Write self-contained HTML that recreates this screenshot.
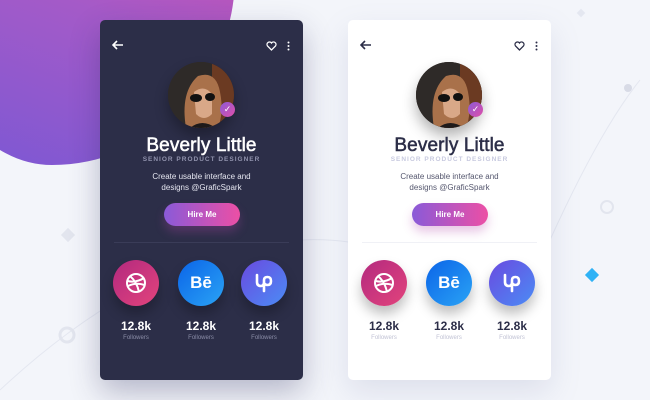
<!DOCTYPE html>
<html><head><style>
*{margin:0;padding:0;box-sizing:border-box}
body{width:650px;height:400px;overflow:hidden;background:#f3f5fa;font-family:"Liberation Sans",sans-serif;position:relative}
.blob{position:absolute;left:-70px;top:-150px;width:305px;height:315px;border-radius:45% 55% 60% 40%/50% 40% 60% 50%;background:linear-gradient(200deg,#e04fa8 0%,#a45ac8 50%,#7a58d4 100%)}
.card{position:absolute;top:20px;width:203px;height:360px;border-radius:5px}
.dark{left:100px;background:#2c2e48;box-shadow:0 12px 30px rgba(40,40,90,.3)}
.light{left:348px;background:#fff;box-shadow:0 12px 30px rgba(120,130,170,.18)}
.c{position:absolute;left:0;width:100%;text-align:center}
.av{position:absolute;left:68px;top:42px;width:66px;height:66px;border-radius:50%;overflow:hidden;background:#3a2e28;box-shadow:0 8px 14px rgba(0,0,0,.3)}
.chk{position:absolute;left:120px;top:82px;width:15px;height:15px;border-radius:50%;background:linear-gradient(135deg,#8b5ad8,#e04fa8);color:#fff;font-size:9px;text-align:center;line-height:15px}
.name{top:115px;font-size:19px;letter-spacing:.1px;-webkit-text-stroke:.5px currentColor}
.sub{top:136px;font-size:6.5px;font-weight:bold;letter-spacing:1px}
.desc{top:151px;font-size:8px;line-height:11px}
.btn{position:absolute;left:64px;top:183px;width:76px;height:23px;border-radius:12px;background:linear-gradient(90deg,#8a5ad8,#ec4fa5);color:#fff;font-size:8px;font-weight:bold;text-align:center;line-height:23px;box-shadow:0 6px 10px rgba(180,70,170,.3)}
.div{position:absolute;left:14px;right:14px;top:222px;height:1px}
.ic{position:absolute;top:240px;width:46px;height:46px;border-radius:50%;color:#fff;text-align:center;line-height:46px;font-weight:bold;font-size:17px;box-shadow:0 8px 12px rgba(0,0,0,.25)}
.ic svg{position:absolute;left:11px;top:11px}
.i1{left:13px;background:linear-gradient(135deg,#b3297f,#e2447c)}
.i2{left:78px;background:linear-gradient(135deg,#0b64e8,#2aa3f5)}
.i3{left:141px;background:linear-gradient(135deg,#6a4ae0,#4b8cf5)}
.num{position:absolute;top:299px;width:60px;text-align:center;font-size:12px;font-weight:bold}
.fol{position:absolute;top:315px;width:60px;text-align:center;font-size:6px}
.dark .name,.dark .num{color:#fff}.dark .sub{color:#9193ad}.dark .desc{color:#e5e6f0}.dark .fol{color:#8c8ea8}.dark .div{background:#3a3c58}
.light .name,.light .num{color:#2c2e48}.light .sub{color:#c7c9df}.light .desc{color:#55576e}.light .fol{color:#c0c2d4}.light .div{background:#f0f1f6}
.top{position:absolute;top:20px;font-size:11px}
</style></head><body>
<div class="blob"></div>
<svg style="position:absolute;left:0;top:0" width="650" height="400"><path d="M0 390 Q150 250 300 240 Q400 235 460 300" stroke="#e4e7f0" fill="none"/><path d="M550 240 Q600 130 640 80" stroke="#e4e7f0" fill="none"/><circle cx="67" cy="335" r="7" stroke="#e2e5ee" stroke-width="3" fill="none"/><circle cx="607" cy="207" r="6" stroke="#e2e5ee" stroke-width="2" fill="none"/><circle cx="628" cy="88" r="4" fill="#d8dbe6"/><rect x="63" y="230" width="10" height="10" transform="rotate(45 68 235)" fill="#e2e5ee"/><rect x="587" y="270" width="10" height="10" transform="rotate(45 592 275)" fill="#2fb2f5"/><rect x="578" y="10" width="6" height="6" transform="rotate(45 581 13)" fill="#e4e7f0"/></svg>
<div class="card dark">
<svg class="top" style="left:12px" width="12" height="10"><path d="M11 5H2M5 1L1 5 5 9" stroke="#fff" stroke-width="1.6" fill="none"/></svg>
<svg class="top" style="left:166px;top:21px" width="11" height="10"><path d="M5.5 9L1.5 5A2.2 2.2 0 0 1 5.5 2 2.2 2.2 0 0 1 9.5 5Z" stroke="#fff" stroke-width="1.3" fill="none"/></svg>
<svg class="top" style="left:187px;top:21px" width="3" height="10"><circle cx="1.5" cy="1.5" r="1" fill="#fff"/><circle cx="1.5" cy="5" r="1" fill="#fff"/><circle cx="1.5" cy="8.5" r="1" fill="#fff"/></svg>
<div class="av"><svg width="66" height="66"><rect width="66" height="66" fill="#2e2a28"/><rect x="44" width="22" height="66" fill="#6b3a22"/><path d="M18 66 Q12 30 30 14 Q48 8 52 30 Q56 50 50 66Z" fill="#a9714a"/><path d="M26 30 Q36 22 44 32 L44 52 Q36 60 28 52Z" fill="#d9a888"/><ellipse cx="28" cy="36" rx="6" ry="4" fill="#111"/><ellipse cx="42" cy="35" rx="5" ry="4" fill="#111"/><path d="M22 66 Q34 56 48 66Z" fill="#1e1a1a"/></svg></div><div class="chk">✓</div>
<div class="c name">Beverly Little</div><div class="c sub">SENIOR PRODUCT DESIGNER</div>
<div class="c desc">Create usable interface and<br>designs @GraficSpark</div>
<div class="btn">Hire Me</div><div class="div"></div>
<div class="ic i1"><svg width="24" height="24" fill="none" stroke="#fff" stroke-width="2"><circle cx="12" cy="12" r="9"/><path d="M6 5Q13 11 15 21M3.5 10Q12 12 20 7M4 15Q12 11 20.5 14"/></svg></div><div class="ic i2">Bē</div><div class="ic i3"><svg width="24" height="24" fill="none" stroke="#fff" stroke-width="2.6" stroke-linecap="round"><path d="M5 4V11Q5 15 9 15Q12 15 12 11V9Q12 6 15.5 6Q19 6 19 10Q19 14 15.5 14Q13 14 12 12M12 10V20"/></svg></div>
<div class="num" style="left:6px">12.8k</div><div class="num" style="left:71px">12.8k</div><div class="num" style="left:134px">12.8k</div>
<div class="fol" style="left:6px">Followers</div><div class="fol" style="left:71px">Followers</div><div class="fol" style="left:134px">Followers</div>
</div>
<div class="card light">
<svg class="top" style="left:12px" width="12" height="10"><path d="M11 5H2M5 1L1 5 5 9" stroke="#2c2e48" stroke-width="1.6" fill="none"/></svg>
<svg class="top" style="left:166px;top:21px" width="11" height="10"><path d="M5.5 9L1.5 5A2.2 2.2 0 0 1 5.5 2 2.2 2.2 0 0 1 9.5 5Z" stroke="#2c2e48" stroke-width="1.3" fill="none"/></svg>
<svg class="top" style="left:187px;top:21px" width="3" height="10"><circle cx="1.5" cy="1.5" r="1" fill="#2c2e48"/><circle cx="1.5" cy="5" r="1" fill="#2c2e48"/><circle cx="1.5" cy="8.5" r="1" fill="#2c2e48"/></svg>
<div class="av"><svg width="66" height="66"><rect width="66" height="66" fill="#2e2a28"/><rect x="44" width="22" height="66" fill="#6b3a22"/><path d="M18 66 Q12 30 30 14 Q48 8 52 30 Q56 50 50 66Z" fill="#a9714a"/><path d="M26 30 Q36 22 44 32 L44 52 Q36 60 28 52Z" fill="#d9a888"/><ellipse cx="28" cy="36" rx="6" ry="4" fill="#111"/><ellipse cx="42" cy="35" rx="5" ry="4" fill="#111"/><path d="M22 66 Q34 56 48 66Z" fill="#1e1a1a"/></svg></div><div class="chk">✓</div>
<div class="c name">Beverly Little</div><div class="c sub">SENIOR PRODUCT DESIGNER</div>
<div class="c desc">Create usable interface and<br>designs @GraficSpark</div>
<div class="btn">Hire Me</div><div class="div"></div>
<div class="ic i1"><svg width="24" height="24" fill="none" stroke="#fff" stroke-width="2"><circle cx="12" cy="12" r="9"/><path d="M6 5Q13 11 15 21M3.5 10Q12 12 20 7M4 15Q12 11 20.5 14"/></svg></div><div class="ic i2">Bē</div><div class="ic i3"><svg width="24" height="24" fill="none" stroke="#fff" stroke-width="2.6" stroke-linecap="round"><path d="M5 4V11Q5 15 9 15Q12 15 12 11V9Q12 6 15.5 6Q19 6 19 10Q19 14 15.5 14Q13 14 12 12M12 10V20"/></svg></div>
<div class="num" style="left:6px">12.8k</div><div class="num" style="left:71px">12.8k</div><div class="num" style="left:134px">12.8k</div>
<div class="fol" style="left:6px">Followers</div><div class="fol" style="left:71px">Followers</div><div class="fol" style="left:134px">Followers</div>
</div>
</body></html>
